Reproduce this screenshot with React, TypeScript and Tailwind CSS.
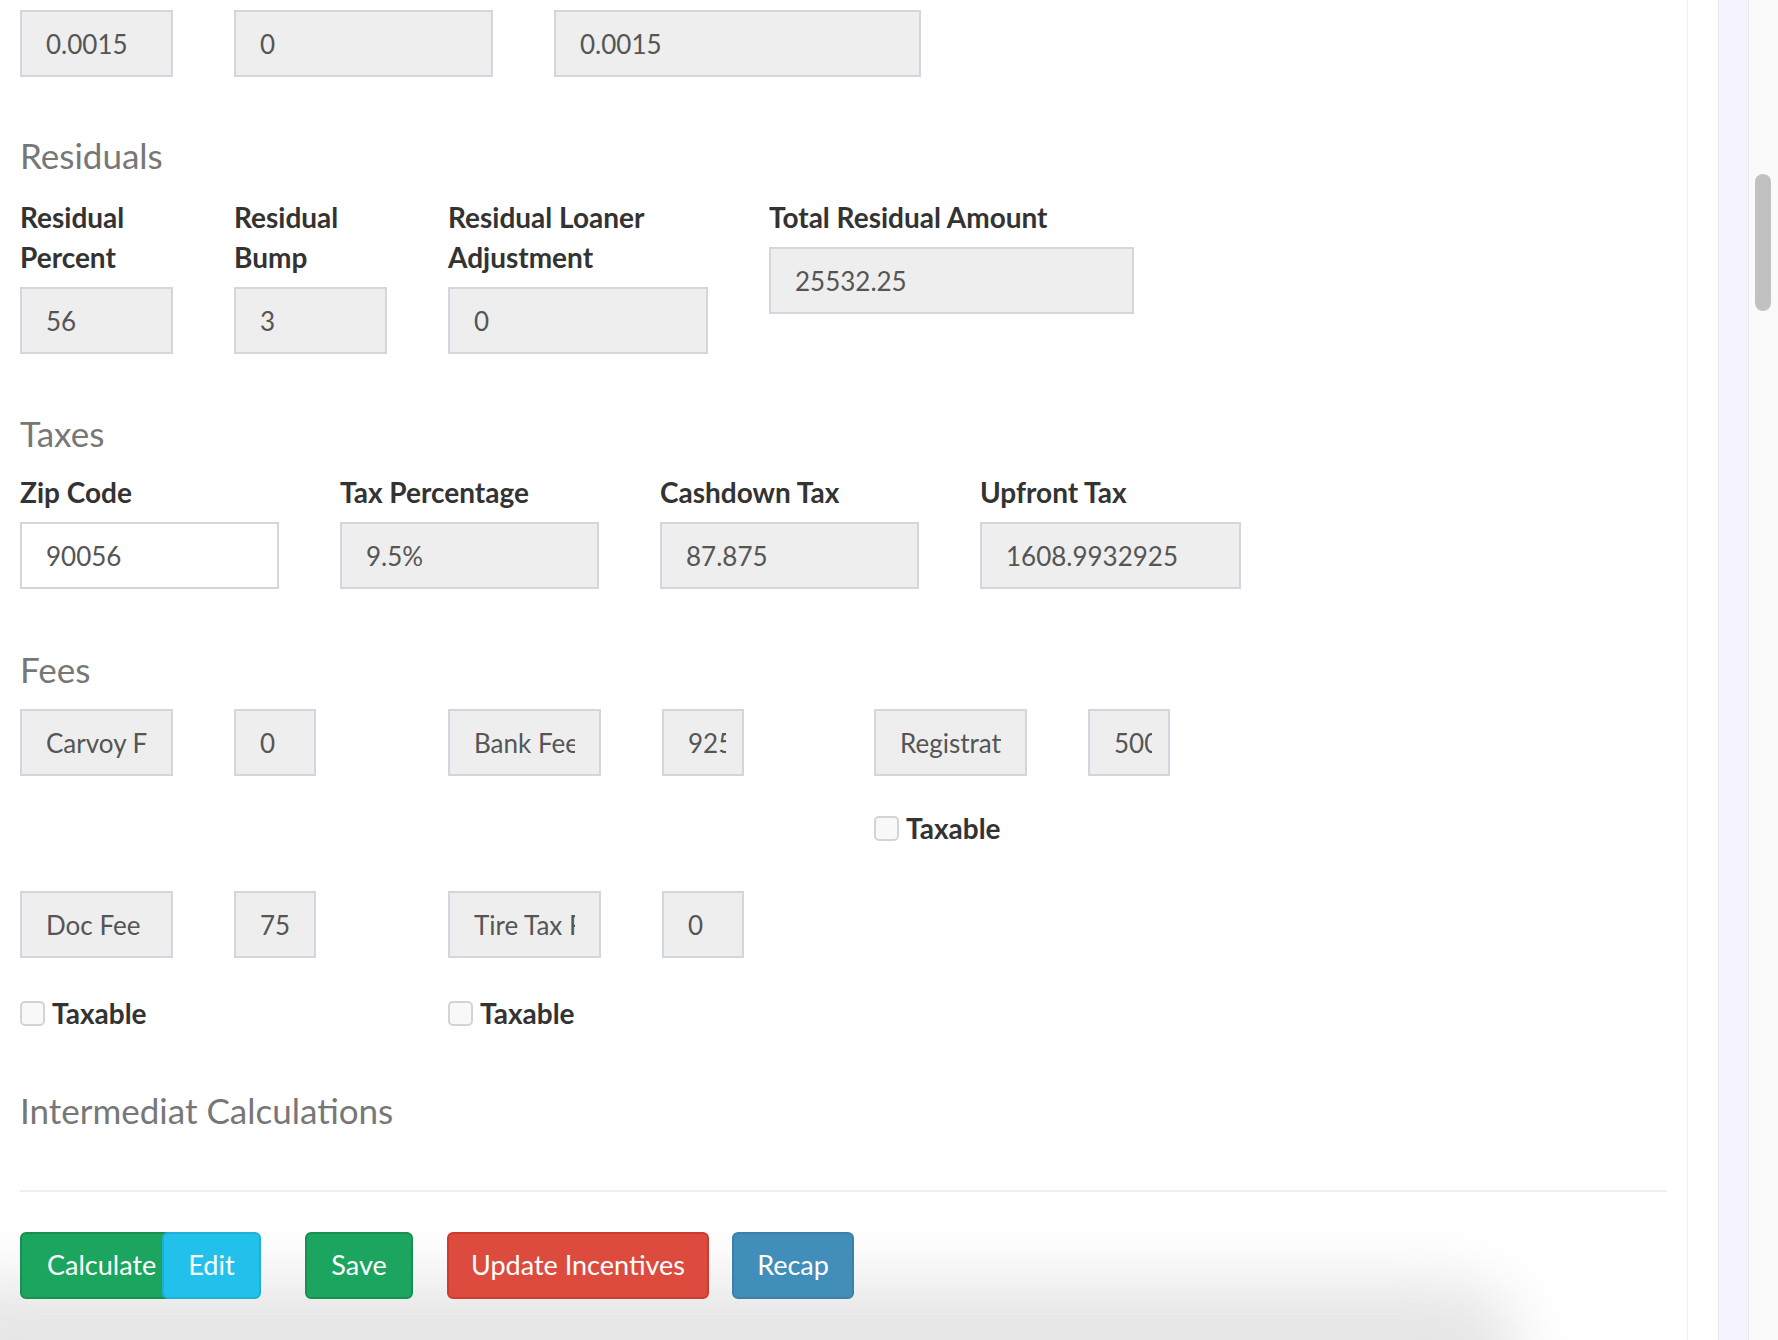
import React from "react";

type FieldProps = {
  label?: string;
  value: string;
  width: number;
  white?: boolean;
};

const inputBase =
  "block h-[67px] border-2 border-[#d2d6de] pl-[24px] text-[26px] text-[#555] outline-none";

const Input = ({
  value,
  width,
  white,
  tight,
}: {
  value: string;
  width: number;
  white?: boolean;
  tight?: boolean;
}) => (
  <input
    readOnly
    value={value}
    style={{ width }}
    className={`${inputBase} ${tight ? "pr-[16px]" : "pr-[24px]"} ${white ? "bg-white" : "bg-[#eeeeee]"}`}
  />
);

const Field: React.FC<FieldProps> = ({ label, value, width, white }) => (
  <div style={{ width }} className="shrink-0">
    {label && (
      <label className="mb-[10px] block text-[28px] font-bold leading-[40px] text-[#333]">{label}</label>
    )}
    <Input value={value} width={width} white={white} />
  </div>
);

const Heading = ({ children, className = "" }: { children: React.ReactNode; className?: string }) => (
  <h4 className={`h-[40px] text-[35px] font-normal leading-[40px] text-[#777] ${className}`}>{children}</h4>
);

const Taxable = () => (
  <div className="flex h-[40px] items-center gap-[7px]">
    <span className="h-[25px] w-[25px] rounded-[5px] border-2 border-[#d4d4d4] bg-[#f8f8f8]" />
    <span className="text-[28px] font-bold text-[#333]">Taxable</span>
  </div>
);

// one fee = name box + amount box
const Fee = ({ name, amount, w }: { name: string; amount: string; w: number }) => (
  <div style={{ width: w }} className="flex shrink-0 gap-[61px]">
    <Input value={name} width={153} />
    <Input value={amount} width={82} tight />
  </div>
);

const Button = ({
  children,
  className,
}: {
  children: React.ReactNode;
  className: string;
}) => (
  <button
    className={`flex h-[67px] shrink-0 items-center justify-center rounded-[6px] border-2 text-[27px] text-white ${className}`}
  >
    {children}
  </button>
);

export default function App() {
  return (
    <div className="relative flex h-[1340px] w-[1778px] overflow-hidden bg-white font-['Lato','Open_Sans',sans-serif]">
      {/* soft shadow at the bottom edge */}
      <div className="pointer-events-none absolute bottom-[-80px] left-[-80px] h-[140px] w-[1600px] rounded-full bg-[#e6e6e6] blur-[30px]" />

      <main className="relative z-10 w-[1688px] shrink-0 border-r border-[#f1f1f1] pl-[20px] pr-[20px]">
        <div className="mt-[10px] flex gap-[61px]">
          <Input value="0.0015" width={153} />
          <Input value="0" width={259} />
          <Input value="0.0015" width={367} />
        </div>

        <Heading className="mt-[58px]">Residuals</Heading>
        <div className="mt-[22px] flex items-start gap-[61px]">
          <Field label="Residual Percent" value="56" width={153} />
          <Field label="Residual Bump" value="3" width={153} />
          <Field label="Residual Loaner Adjustment" value="0" width={260} />
          <Field label="Total Residual Amount" value="25532.25" width={365} />
        </div>

        <Heading className="mt-[59px]">Taxes</Heading>
        <div className="mt-[19px] flex gap-[61px]">
          <Field label="Zip Code" value="90056" width={259} white />
          <Field label="Tax Percentage" value="9.5%" width={259} />
          <Field label="Cashdown Tax" value="87.875" width={259} />
          <Field label="Upfront Tax" value="1608.9932925" width={261} />
        </div>

        <Heading className="mt-[60px]">Fees</Heading>
        <div className="mt-[20px] flex">
          <Fee name="Carvoy Fee" amount="0" w={428} />
          <Fee name="Bank Fee" amount="925" w={426} />
          <Fee name="Registration Fee" amount="500" w={426} />
        </div>
        <div className="mt-[32px] flex">
          <div className="w-[854px]" />
          <Taxable />
        </div>

        <div className="mt-[43px] flex">
          <Fee name="Doc Fee" amount="75" w={428} />
          <Fee name="Tire Tax Fee" amount="0" w={426} />
        </div>
        <div className="mt-[35px] flex">
          <div className="w-[428px]">
            <Taxable />
          </div>
          <Taxable />
        </div>

        <Heading className="mt-[57px]">Intermediat Calculations</Heading>
        <hr className="mt-[60px] border-t-2 border-[#eeeeee]" />

        <div className="mt-[40px] flex">
          <Button className="w-[158px] justify-start rounded-r-none border-[#179150] bg-[#1ca55f] pl-[25px]">Calculate</Button>
          <Button className="ml-[-16px] w-[99px] border-[#1fb0d8] bg-[#22c1ec]">Edit</Button>
          <Button className="ml-[44px] w-[108px] border-[#179150] bg-[#1ca55f]">Save</Button>
          <Button className="ml-[34px] w-[262px] border-[#d13a2e] bg-[#dc4b3e]">Update Incentives</Button>
          <Button className="ml-[23px] w-[122px] border-[#3a80a8] bg-[#418ebb]">Recap</Button>
        </div>
      </main>

      <div className="w-[30px] shrink-0" />
      <div className="w-[31px] shrink-0 border-x border-[#e9e7f1] bg-[#f5f3fe]" />
      <div className="flex-1 bg-[#fafafa] pl-[6px]">
        <div className="mt-[174px] h-[137px] w-[16px] rounded-full bg-[#c1c1c1]" />
      </div>
    </div>
  );
}
